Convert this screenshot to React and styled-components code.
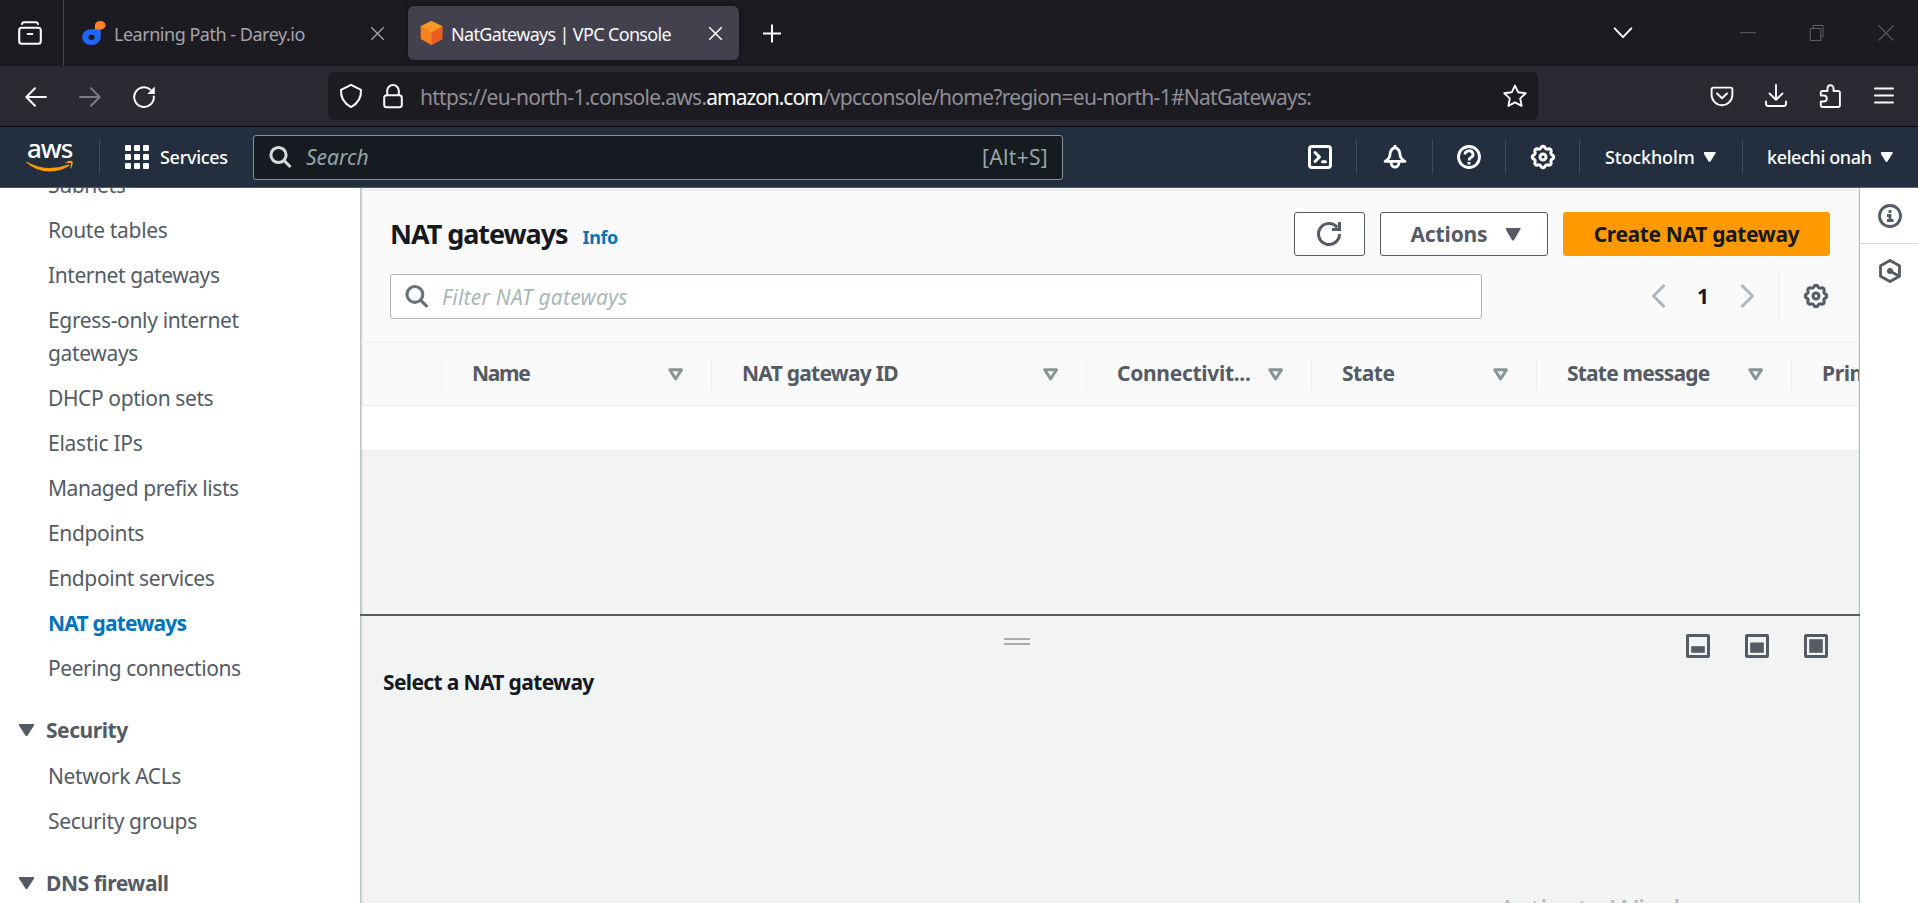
import React from "react";
import styled, { createGlobalStyle } from "styled-components";

const Global = createGlobalStyle`
  * { box-sizing: border-box; }
  body { margin: 0; font-family: "Noto Sans", "Open Sans", sans-serif; overflow: hidden; }
`;

const Page = styled.div`
  width: 1918px;
  height: 903px;
  display: flex;
  flex-direction: column;
  overflow: hidden;
  background: #fff;
`;

const Svg = styled.svg`
  display: block;
  flex: none;
  overflow: visible;
  fill: none;
  stroke: currentColor;
  stroke-width: ${(p) => p.$w || 2};
  stroke-linecap: ${(p) => p.$cap || "round"};
  stroke-linejoin: ${(p) => p.$join || "round"};
`;

const Icon = ({ size = 24, w, cap, join, children }) => (
  <Svg width={size} height={size} viewBox="0 0 24 24" $w={w} $cap={cap} $join={join}>
    {children}
  </Svg>
);

/* ---------- browser chrome ---------- */

const TabStrip = styled.div`
  flex: none;
  height: 66px;
  display: flex;
  align-items: center;
  background: #1c1b22;
  color: #fbfbfe;
`;

const FirefoxView = styled.div`
  width: 64px;
  height: 66px;
  padding-left: 18px;
  display: flex;
  align-items: center;
  border-right: 1px solid #45444b;
`;

const Tab = styled.div`
  width: 331px;
  height: 54px;
  margin-left: ${(p) => (p.$active ? 5 : 8)}px;
  padding: 0 ${(p) => (p.$active ? 16 : 18)}px 0 ${(p) => (p.$active ? 12 : 10)}px;
  display: flex;
  align-items: center;
  border-radius: 6px;
  font-size: 18px;
  line-height: 24px;
  letter-spacing: ${(p) => p.$ls}px;
  color: ${(p) => (p.$active ? "#fbfbfe" : "#a5a4aa")};
  background: ${(p) => (p.$active ? "#42414d" : "transparent")};
  box-shadow: ${(p) => (p.$active ? "0 0 4px rgba(0,0,0,0.5)" : "none")};
`;

const TabTitle = styled.span`
  flex: 1;
  margin-left: 8px;
  padding-top: 1px;
  white-space: nowrap;
`;

const NewTab = styled.div`
  margin-left: 21px;
`;

const WindowControls = styled.div`
  margin-left: auto;
  padding-right: 23px;
  display: flex;
  align-items: center;
  color: #5c5b61;
`;

const TabList = styled.div`
  margin-right: 107px;
  color: #fbfbfe;
`;

const ControlSlot = styled.div`
  width: 18px;
  margin-left: ${(p) => p.$gap || 0}px;
`;

const NavBar = styled.div`
  flex: none;
  height: 61px;
  display: flex;
  align-items: center;
  background: #2b2a33;
  border-bottom: 1px solid #0c0c0d;
  color: #fbfbfe;
`;

const NavButtons = styled.div`
  width: 328px;
  padding: 1px 0 0 24px;
  display: flex;
  gap: 30px;
`;

const NavButton = styled.div`
  color: ${(p) => (p.$off ? "#7b7a80" : "#fbfbfe")};
`;

const UrlBar = styled.div`
  width: 1210px;
  height: 48px;
  padding: 0 11px 0 11px;
  display: flex;
  align-items: center;
  gap: 18px;
  border-radius: 6px;
  background: #1c1b22;
`;

const Url = styled.div`
  flex: 1;
  margin-left: -3px;
  padding-top: 2px;
  font-size: 21px;
  line-height: 30px;
  letter-spacing: -0.72px;
  color: #8f8e94;
  white-space: nowrap;
`;

const Domain = styled.span`
  letter-spacing: -1.05px;
  color: #fbfbfe;
`;

const ToolbarIcons = styled.div`
  margin-left: auto;
  padding-right: 22px;
  display: flex;
  align-items: center;
  gap: 30px;
`;

/* ---------- console header ---------- */

const Header = styled.header`
  flex: none;
  height: 61px;
  display: flex;
  align-items: center;
  background: #232f3e;
  border-bottom: 1px solid #545b64;
  color: #fff;
`;

const AwsLogo = styled.div`
  width: 99px;
  height: 60px;
  padding: 8px 0 0 26px;
`;

const AwsWord = styled.div`
  height: 26px;
  padding-left: 1px;
  font-size: 26px;
  line-height: 26px;
  font-weight: 500;
  letter-spacing: -1.1px;
`;

const Divider = styled.div`
  flex: none;
  width: 1px;
  height: 34px;
  background: #414d5c;
`;

const Services = styled.div`
  width: 153px;
  padding-left: 25px;
  display: flex;
  align-items: center;
  gap: 11px;
  font-size: 18px;
  font-weight: 500;
  line-height: 27px;
  letter-spacing: -0.3px;
`;

const Dots = styled.div`
  display: grid;
  grid-template-columns: repeat(3, 6px);
  grid-auto-rows: 6px;
  gap: 3px;
  i { background: #fff; border-radius: 1px; }
`;

const SearchBox = styled.div`
  width: 810px;
  height: 45px;
  padding: 0 14px 0 15px;
  display: flex;
  align-items: center;
  border: 1px solid #879596;
  border-radius: 3px;
  background: #161b22;
  color: #95a5a6;
  font-size: 21px;
`;

const SearchIcon = styled.div`
  color: #d5dbdb;
`;

const SearchText = styled.span`
  flex: 1;
  margin-left: 13px;
  font-style: italic;
`;

const Shortcut = styled.span`
  letter-spacing: 0.3px;
`;

const HeaderTools = styled.div`
  margin-left: auto;
  display: flex;
  align-items: center;
`;

const Tool = styled.div`
  width: ${(p) => p.$width}px;
  display: flex;
  align-items: center;
  justify-content: center;
`;

const HeaderMenu = styled.div`
  width: ${(p) => p.$width}px;
  padding-left: ${(p) => p.$pad}px;
  display: flex;
  align-items: center;
  gap: 9px;
  font-size: 18px;
  font-weight: 500;
  letter-spacing: ${(p) => p.$ls}px;
  white-space: nowrap;
`;

/* ---------- console body ---------- */

const Body = styled.div`
  flex: 1;
  min-height: 0;
  display: flex;
`;

const SideNav = styled.nav`
  flex: none;
  width: 360px;
  overflow: hidden;
  color: #545b64;
  font-size: 21px;
  line-height: 33px;
`;

const NavList = styled.div`
  margin-top: ${(p) => p.$top}px;
  padding-left: 48px;
`;

const NavItem = styled.div`
  width: 230px;
  margin-bottom: 12px;
  letter-spacing: ${(p) => p.$ls ?? -0.35}px;
  font-weight: ${(p) => (p.$active ? 700 : 400)};
  color: ${(p) => (p.$active ? "#0073bb" : "#545b64")};
`;

const NavSection = styled.div`
  margin-top: 29px;
  height: 33px;
  padding-left: 19px;
  display: flex;
  align-items: center;
  gap: 12px;
  font-weight: 700;
  letter-spacing: -0.45px;
`;

const Main = styled.main`
  flex: 1;
  min-width: 0;
  display: flex;
  flex-direction: column;
  overflow: hidden;
  background: #f2f3f3;
`;

const TableArea = styled.section`
  flex: none;
  height: 426px;
  padding-top: 2px;
  border-left: 1px solid #b9c2c4;
  box-shadow: inset 2px 0 2px -1px rgba(0, 28, 36, 0.2);
`;

const TableTop = styled.div`
  height: 153px;
  padding: 21px 30px 0 29px;
  background: #fafafa;
  border-top: 1px solid #eaeded;
  border-bottom: 1px solid #eaeded;
  box-shadow: inset 3px 0 2px -2px rgba(0, 28, 36, 0.2);
`;

const TitleRow = styled.div`
  height: 44px;
  display: flex;
  align-items: center;
`;

const Title = styled.h1`
  margin: 0 15px 0 0;
  font-size: 27px;
  line-height: 36px;
  font-weight: 700;
  letter-spacing: -1.05px;
  color: #16191f;
`;

const Info = styled.a`
  margin-top: 5px;
  font-size: 18px;
  font-weight: 700;
  letter-spacing: -0.4px;
  color: #0073bb;
`;

const Buttons = styled.div`
  margin-left: auto;
  display: flex;
  gap: 15px;
`;

const Button = styled.button`
  width: ${(p) => p.$width}px;
  height: 44px;
  padding: 0 0 0 ${(p) => p.$shift || 0}px;
  display: flex;
  align-items: center;
  justify-content: center;
  gap: 18px;
  border: 1px solid ${(p) => (p.$primary ? "#ff9900" : "#545b64")};
  border-radius: 3px;
  background: ${(p) => (p.$primary ? "#ff9900" : "#fff")};
  color: ${(p) => (p.$primary ? "#16191f" : "#545b64")};
  font: 700 21px "Noto Sans", sans-serif;
  letter-spacing: ${(p) => (p.$primary ? -0.36 : -0.15)}px;
`;

const FilterRow = styled.div`
  margin-top: 18px;
  display: flex;
  align-items: flex-start;
`;

const Filter = styled.div`
  width: 1092px;
  height: 45px;
  padding-left: 14px;
  display: flex;
  align-items: center;
  gap: 12px;
  border: 1px solid #aab7b8;
  border-radius: 3px;
  background: #fff;
  color: #687078;
`;

const FilterHint = styled.span`
  font-size: 21px;
  font-style: italic;
  letter-spacing: 0.25px;
  color: #aab7b8;
`;

const Pager = styled.div`
  margin-left: auto;
  padding-right: 2px;
  height: 44px;
  display: flex;
  align-items: center;
  color: #aab7b8;
`;

const PageNumber = styled.span`
  width: 64px;
  text-align: center;
  font-size: 21px;
  font-weight: 700;
  color: #16191f;
`;

const PagerGear = styled.div`
  height: 44px;
  margin-left: 19px;
  padding-left: 25px;
  display: flex;
  align-items: center;
  border-left: 1px solid #eaeded;
  color: #545b64;
`;

const HeadRow = styled.div`
  height: 63px;
  display: flex;
  align-items: center;
  overflow: hidden;
  background: #fafafa;
  border-bottom: 1px solid #eaeded;
  box-shadow: inset 3px 0 2px -2px rgba(0, 28, 36, 0.2);
`;

const HeadCell = styled.div`
  flex: none;
  width: ${(p) => p.$width}px;
  height: 31px;
  padding: 0 28px 0 30px;
  display: flex;
  align-items: center;
  justify-content: space-between;
  border-right: 1px solid #eaeded;
  font-size: 21px;
  line-height: 29px;
  font-weight: 700;
  letter-spacing: ${(p) => p.$ls}px;
  white-space: nowrap;
  color: #545b64;
`;

const HeadLabel = styled.span`
  margin-top: -2px;
`;

const EmptyRow = styled.div`
  height: 45px;
  background: #fff;
  border-bottom: 1px solid #eaeded;
  box-shadow: inset 3px 0 2px -2px rgba(0, 28, 36, 0.2);
`;

const SplitPanel = styled.section`
  flex: 1;
  min-height: 0;
  position: relative;
  border-top: 2px solid #545b64;
  padding: 18px 30px 0 23px;
  box-shadow: inset 1px 0 #b9c2c4, inset 3px 0 2px -1px rgba(0, 28, 36, 0.15);
`;

const PanelBar = styled.div`
  display: flex;
  align-items: flex-start;
`;

const Handle = styled.div`
  width: 26px;
  height: 7px;
  margin: 4px 0 0 621px;
  border-top: 2px solid #aaacac;
  border-bottom: 2px solid #aaacac;
`;

const PanelSizes = styled.div`
  margin-left: auto;
  padding-right: 2px;
  display: flex;
  gap: 35px;
  color: #545b64;
`;

const PanelTitle = styled.h2`
  margin: 8px 0 0;
  font-size: 21px;
  line-height: 32px;
  font-weight: 700;
  letter-spacing: -0.65px;
  color: #16191f;
`;

const Watermark = styled.div`
  position: absolute;
  left: 1138px;
  bottom: -28px;
  font-size: 30px;
  line-height: 40px;
  letter-spacing: -0.8px;
  color: #b9baba;
  white-space: nowrap;
`;

const Rail = styled.aside`
  flex: none;
  width: 58px;
  display: flex;
  flex-direction: column;
  background: #fff;
  color: #545b64;
  box-shadow: -1px 0 1px #b4b9ba;
`;

const RailItem = styled.div`
  height: ${(p) => p.$height}px;
  padding-left: 2px;
  display: flex;
  align-items: center;
  justify-content: center;
  border-bottom: ${(p) => (p.$line ? "1px solid #d5dbdb" : "none")};
`;

/* ---------- glyphs ---------- */

const gearPath = (() => {
  const pts = [];
  for (let i = 0; i < 160; i++) {
    const t = (i / 160) * Math.PI * 2;
    const wave = Math.cos(8 * t);
    const r = 9.7 + 1.0 * Math.sign(wave) * Math.pow(Math.abs(wave), 0.7);
    pts.push(`${(12 + r * Math.sin(t)).toFixed(2)} ${(12 - r * Math.cos(t)).toFixed(2)}`);
  }
  return `M${pts.join("L")}Z`;
})();

const Gear = () => (
  <Icon w={3}>
    <path d={gearPath} />
    <circle cx="12" cy="12" r="3" />
  </Icon>
);

const Magnifier = ({ size, w }) => (
  <Icon size={size} w={w} cap="butt">
    <circle cx="9.5" cy="10" r="7.6" />
    <path d="M14.9 15.400l6.600 6.600" />
  </Icon>
);

const Caret = styled.div`
  flex: none;
  width: ${(p) => p.$w}px;
  height: ${(p) => p.$h}px;
  background: currentColor;
  clip-path: polygon(0 0, 100% 0, 100% 12%, 55% 100%, 45% 100%, 0 12%);
`;

const SortMark = () => (
  <Svg width="15" height="13" viewBox="0 0 15 13" $w={3} color="#879596">
    <path d="M1.700 1.800h11.800L7.600 10.900z" />
  </Svg>
);

const RefreshBrowser = () => (
  <Icon>
    <path d="M21.800 11.500A9.800 9.800 0 1 1 18.500 4.800" />
    <path d="M22.800 1.500v7.500h-7.500z" fill="currentColor" stroke="none" />
  </Icon>
);

const SizeIcon = ({ y }) => (
  <Icon w={3}>
    <rect x="1.500" y="1.500" width="21" height="21" rx="0.500" />
    <rect x="5.200" y={y} width="13.600" height={18.8 - y} fill="currentColor" stroke="none" />
  </Icon>
);

const columns = [
  ["Name", 270, -1.3],
  ["NAT gateway ID", 375, -0.75],
  ["Connectivit...", 225, -0.3],
  ["State", 225, -0.5],
  ["State message", 255, -0.8],
  ["Primary public IPv4", 300, -0.4],
];

const links = [
  ["Subnets"],
  ["Route tables", -0.3],
  ["Internet gateways", -0.43],
  ["Egress-only internet gateways", -0.35],
  ["DHCP option sets", -0.4],
  ["Elastic IPs", -0.25],
  ["Managed prefix lists", -0.44],
  ["Endpoints", -0.35],
  ["Endpoint services", -0.4],
  ["NAT gateways", -0.8, true],
  ["Peering connections", -0.46],
];

export default function App() {
  return (
    <Page>
      <Global />
      <TabStrip>
        <FirefoxView>
          <Icon w={2.1}>
            <rect x="1.200" y="6.700" width="21.600" height="16" rx="2.500" />
            <path d="M4 3q.500-1.700 2-1.700h12q1.500 0 2 1.700M9.700 13h4.600" />
          </Icon>
        </FirefoxView>
        <Tab $ls={-0.48}>
          <Svg width="24" height="24" viewBox="0 0 24 24">
            <path d="M18.800 8.200V16A9.400 7.900 0 1 1 9.400 8.200z" fill="#2264f5" stroke="none" />
            <ellipse cx="9.600" cy="16.300" rx="3.100" ry="2.600" fill="#1c1b22" stroke="none" />
            <path d="M13 4.200A5.300 4.200 0 1 1 18.300 8.400H13z" fill="#ff8126" stroke="none" />
          </Svg>
          <TabTitle>Learning Path - Darey.io</TabTitle>
          <Icon size={15} w={2.2} cap="butt"><path d="M2 2l20 20M22 2L2 22" /></Icon>
        </Tab>
        <Tab $active $ls={-0.66}>
          <Svg width="23" height="24" viewBox="0 0 23 24">
            <path d="M11.500 0L22.300 5.300V18L11.500 24 .700 18V5.300z" fill="#f58220" stroke="none" />
            <path d="M11.500 0L22.300 5.300 11.500 11.500.700 5.300z" fill="#fd9827" stroke="none" />
            <path d="M22.300 5.300V18L11.500 24V11.500z" fill="#ea5f20" stroke="none" />
          </Svg>
          <TabTitle>NatGateways | VPC Console</TabTitle>
          <Icon size={15} w={2.6} cap="butt"><path d="M2 2l20 20M22 2L2 22" /></Icon>
        </Tab>
        <NewTab>
          <Icon w={2} cap="butt"><path d="M12 3.500v18M3 12.500h18" /></Icon>
        </NewTab>
        <WindowControls>
          <TabList>
            <Icon size={20} w={2.4}><path d="M2 6.500l10 10.500 10-10.500" /></Icon>
          </TabList>
          <ControlSlot>
            <Icon size={16} w={1.6} cap="butt"><path d="M0 11.500h24" /></Icon>
          </ControlSlot>
          <ControlSlot $gap={50}>
            <Icon size={18} w={1.4} join="miter"><path d="M3 6h14v16H3zM7 6V2h13v15h-3" /></Icon>
          </ControlSlot>
          <ControlSlot $gap={51}>
            <Icon size={18} w={1.5} cap="butt"><path d="M2 2l20 20M22 2L2 22" /></Icon>
          </ControlSlot>
        </WindowControls>
      </TabStrip>

      <NavBar>
        <NavButtons>
          <NavButton><Icon><path d="M22 12H2.500M11 3.300L2.300 12l8.700 8.700" /></Icon></NavButton>
          <NavButton $off><Icon><path d="M2 12h19.500M13 3.300l8.700 8.700-8.700 8.700" /></Icon></NavButton>
          <NavButton><RefreshBrowser /></NavButton>
        </NavButtons>
        <UrlBar>
          <Icon>
            <path d="M12 .8L22 5.8q.6 11.7-10 17.4Q1.400 17.500 2 5.800z" />
          </Icon>
          <Icon>
            <rect x="3.200" y="11.200" width="17.600" height="12" rx="2.500" />
            <path d="M6.200 11V6.800a5.800 5.800 0 0 1 11.600 0V11" />
          </Icon>
          <Url>
            https://eu-north-1.console.aws.<Domain>amazon.com</Domain>
            /vpcconsole/home?region=eu-north-1#NatGateways:
          </Url>
          <Icon w={1.9}>
            <path d="M12 1.600l3.100 6.600 7.600 1-5.500 5.200 1.400 7.500-6.600-3.600-6.600 3.600 1.400-7.500L1.300 9.200l7.600-1z" />
          </Icon>
        </UrlBar>
        <ToolbarIcons>
          <Icon w={1.9}>
            <path d="M3.400 3.600h17.200q1.800 0 1.800 1.800v5.400a10.400 10.400 0 0 1-20.800 0V5.400q0-1.800 1.800-1.800zM7 9.500l5 4.800 5-4.800" />
          </Icon>
          <Icon w={1.9}>
            <path d="M12 1v14.500M5.500 9.500l6.500 6.300 6.500-6.300M2 17.500v2.200q0 2.300 2.300 2.300h15.400q2.300 0 2.300-2.300v-2.200" />
          </Icon>
          <Icon w={1.9}>
            <path d="M4.500 7h5V4.200a3 3 0 0 1 6 0V7h4.700q1.700 0 1.700 1.700v12.600q0 1.700-1.700 1.700H4.500q-1.700 0-1.700-1.700V17.500h3a3 3 0 0 0 0-6h-3V8.700Q2.800 7 4.500 7z" />
          </Icon>
          <Icon w={1.9}><path d="M3 4.500h18M3 11.500h18M3 18.500h18" /></Icon>
        </ToolbarIcons>
      </NavBar>

      <Header>
        <AwsLogo>
          <AwsWord>aws</AwsWord>
          <Svg width="48" height="12" viewBox="0 0 48 12" color="#ff9900">
            <path d="M.6.8Q21 11.800 42.200 3.500q2-.5.900 1.300Q35.500 10.500 24 10.500 10 10.500.300 1.500-.1.600.600.800z" fill="currentColor" stroke="none" />
            <path d="M38.500 1.800Q42.500-.5 46-.1 47.700.6 45.600 6.300 45 7.600 44.200 7.800L45.100 2.400Q43 1.400 38.500 1.800z" fill="currentColor" stroke="none" />
          </Svg>
        </AwsLogo>
        <Divider />
        <Services>
          <Dots>{Array.from({ length: 9 }, (_, i) => <i key={i} />)}</Dots>
          Services
        </Services>
        <SearchBox>
          <SearchIcon><Magnifier size={24} w={3} /></SearchIcon>
          <SearchText>Search</SearchText>
          <Shortcut>[Alt+S]</Shortcut>
        </SearchBox>
        <HeaderTools>
          <Tool $width={73}>
            <Icon w={3} join="round" cap="round">
              <rect x="1.500" y="1.500" width="21" height="21" rx="2.500" />
              <path d="M7 7.500l4.500 4.500L7 16.500M14.500 16.800h3" />
            </Icon>
          </Tool>
          <Divider />
          <Tool $width={75}>
            <Icon w={2.8} cap="butt">
              <path d="M12 2.600Q16.700 3.800 17 9.500 17.300 14 22 16.400H2Q6.700 14 7 9.500 7.300 3.800 12 2.600z" />
              <path d="M12 0v2.500M8.200 17v1.300a3.800 3.800 0 0 0 7.600 0V17" />
            </Icon>
          </Tool>
          <Divider />
          <Tool $width={72}>
            <Icon w={2.8} cap="butt">
              <circle cx="12" cy="12" r="10.500" />
              <path d="M8 9.500a4 3.600 0 1 1 5.800 3.100Q12 13.500 12 15.500M12 17v2.600" />
            </Icon>
          </Tool>
          <Divider />
          <Tool $width={73}><Gear /></Tool>
          <Divider />
          <HeaderMenu $width={162} $pad={25} $ls={-0.15}>Stockholm <Caret $w={12} $h={10} /></HeaderMenu>
          <Divider />
          <HeaderMenu $width={175} $pad={24} $ls={-0.38}>kelechi onah <Caret $w={12} $h={10} /></HeaderMenu>
        </HeaderTools>
      </Header>

      <Body>
        <SideNav>
          <NavList $top={-19.5}>
            {links.map(([label, ls, active]) => (
              <NavItem key={label} $ls={ls} $active={active}>{label}</NavItem>
            ))}
          </NavList>
          <NavSection><Caret $w={15} $h={12} />Security</NavSection>
          <NavList $top={13}>
            <NavItem>Network ACLs</NavItem>
            <NavItem>Security groups</NavItem>
          </NavList>
          <NavSection><Caret $w={15} $h={12} />DNS firewall</NavSection>
        </SideNav>

        <Main>
          <TableArea>
            <TableTop>
              <TitleRow>
                <Title>NAT gateways</Title>
                <Info>Info</Info>
                <Buttons>
                  <Button $width={71}>
                    <Icon w={3} cap="butt" join="miter">
                      <path d="M21.500 12A10.500 10.500 0 1 1 19.200 5.500M21.500 0v7.500H14" />
                    </Icon>
                  </Button>
                  <Button $width={168} $shift={3}>Actions<Caret $w={15} $h={13} /></Button>
                  <Button $width={267} $primary>Create NAT gateway</Button>
                </Buttons>
              </TitleRow>
              <FilterRow>
                <Filter>
                  <Magnifier size={25} w={3} />
                  <FilterHint>Filter NAT gateways</FilterHint>
                </Filter>
                <Pager>
                  <Icon w={3} cap="butt"><path d="M17.500 1L6.500 12l11 11" /></Icon>
                  <PageNumber>1</PageNumber>
                  <Icon w={3} cap="butt"><path d="M6.500 1l11 11-11 11" /></Icon>
                  <PagerGear><Gear /></PagerGear>
                </Pager>
              </FilterRow>
            </TableTop>
            <HeadRow>
              <HeadCell $width={81} />
              {columns.map(([label, width, ls]) => (
                <HeadCell key={label} $width={width} $ls={ls}>
                  <HeadLabel>{label}</HeadLabel>
                  <SortMark />
                </HeadCell>
              ))}
            </HeadRow>
            <EmptyRow />
          </TableArea>
          <SplitPanel>
            <PanelBar>
              <Handle />
              <PanelSizes>
                <SizeIcon y={12.2} />
                <SizeIcon y={8.5} />
                <SizeIcon y={5.2} />
              </PanelSizes>
            </PanelBar>
            <PanelTitle>Select a NAT gateway</PanelTitle>
            <Watermark>Activate Windows</Watermark>
          </SplitPanel>
        </Main>

        <Rail>
          <RailItem $height={56} $line>
            <Icon w={2.8} cap="butt" join="miter">
              <circle cx="12" cy="12" r="10.500" />
              <path d="M12 6v3M9 11.500h3v6M9 16.500h6.500" />
            </Icon>
          </RailItem>
          <RailItem $height={54}>
            <Icon w={2.8} cap="butt">
              <path d="M12 1.500l9.500 5.300v10.400L12 22.500l-9.500-5.300V6.800z" />
              <circle cx="12" cy="12" r="3" fill="currentColor" stroke="none" />
              <path d="M12 12l8 4.500" />
            </Icon>
          </RailItem>
        </Rail>
      </Body>
    </Page>
  );
}
